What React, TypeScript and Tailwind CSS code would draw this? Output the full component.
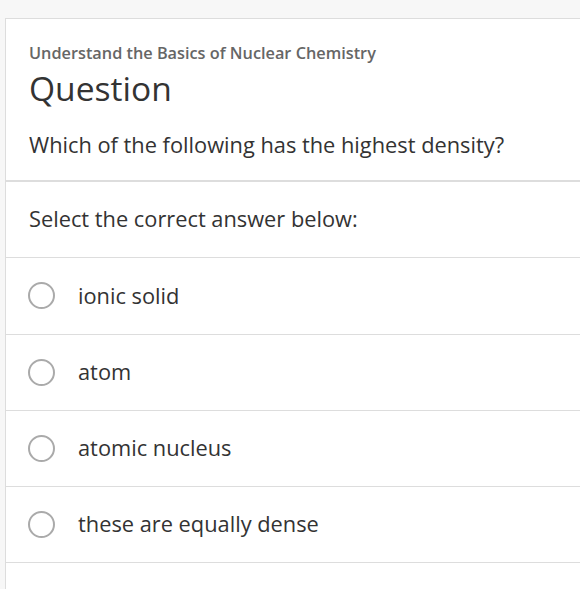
import React from "react";

const options = ["ionic solid", "atom", "atomic nucleus", "these are equally dense"];

export default function App() {
  return (
    <div className="min-h-[589px] w-[580px] overflow-hidden bg-[#f7f7f7] pt-[18px] pl-[5px]" style={{ fontFamily: '"Open Sans", sans-serif' }}>
      <div className="min-h-[571px] w-[600px] border-l border-t border-[#dddddd] bg-white text-[#333333]">
        <div className="border-b-2 border-[#dddddd] pl-[23px] pt-[22px] pb-[21px]">
          <div className="text-[16.3px] font-semibold leading-[24px] text-[#666666]">Understand the Basics of Nuclear Chemistry</div>
          <div className="mt-[1px] text-[33.6px] leading-[44px]">Question</div>
          <div className="mt-[21px] text-[21.8px] leading-[28px]">Which of the following has the highest density?</div>
        </div>
        <div className="flex h-[76.25px] items-center border-b border-[#dddddd] pl-[23px] text-[21.8px]">Select the correct answer below:</div>
        {options.map((o) => (
          <div key={o} className="flex h-[76.25px] items-center gap-[23px] border-b border-[#dddddd] pl-[22px] text-[21.8px]">
            <div className="h-[27px] w-[27px] shrink-0 rounded-full border-2 border-[#aaaaaa]" />
            <span>{o}</span>
          </div>
        ))}
      </div>
    </div>
  );
}
